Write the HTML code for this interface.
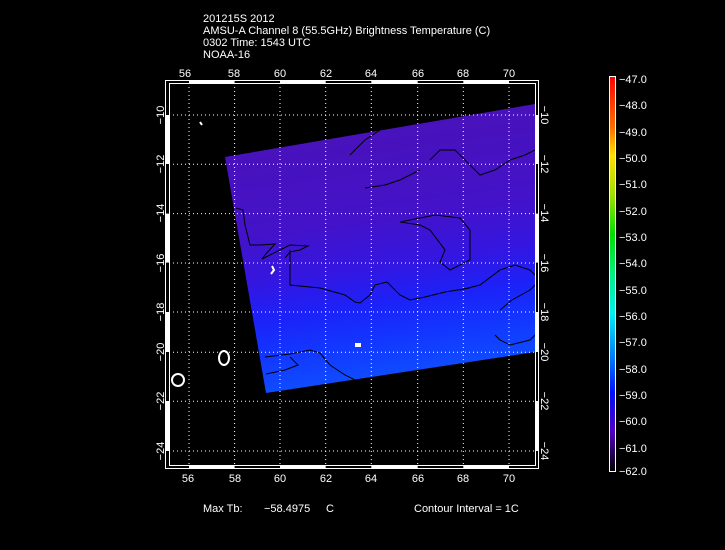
<!DOCTYPE html>
<html><head><style>
html,body{margin:0;padding:0;background:#000;width:725px;height:550px;overflow:hidden}
svg{display:block}
text{font-family:"Liberation Sans",sans-serif;fill:#fff;font-size:11px}
</style></head><body>
<svg width="725" height="550" viewBox="0 0 725 550" xmlns="http://www.w3.org/2000/svg">
<defs>
<linearGradient id="sw" x1="0" y1="0" x2="0.15" y2="1">
<stop offset="0" stop-color="#4a12b4"/>
<stop offset="0.45" stop-color="#4412c8"/>
<stop offset="0.62" stop-color="#3416e0"/>
<stop offset="0.75" stop-color="#1c22f8"/>
<stop offset="0.88" stop-color="#1238ff"/>
<stop offset="1" stop-color="#104cff"/>
</linearGradient>
<linearGradient id="cb" x1="0" y1="0" x2="0" y2="1">
<stop offset="0" stop-color="#ff0000"/>
<stop offset="0.13" stop-color="#ff7000"/>
<stop offset="0.2" stop-color="#ffe000"/>
<stop offset="0.3" stop-color="#a0e000"/>
<stop offset="0.4" stop-color="#00e000"/>
<stop offset="0.5" stop-color="#00f080"/>
<stop offset="0.6" stop-color="#00f0f0"/>
<stop offset="0.72" stop-color="#0070ff"/>
<stop offset="0.8" stop-color="#0010ff"/>
<stop offset="0.9" stop-color="#5000c0"/>
<stop offset="1" stop-color="#000000"/>
</linearGradient>
</defs>
<g>
<text x="203" y="22">201215S 2012</text>
<text x="203" y="34">AMSU-A Channel 8 (55.5GHz) Brightness Temperature (C)</text>
<text x="203" y="46">0302 Time: 1543 UTC</text>
<text x="203" y="58">NOAA-16</text>
</g>
<polygon points="225,157 535,104 535,352 266,393" fill="url(#sw)"/>
<g fill="none" stroke="#000" stroke-width="1">
<polyline points="236,208 243,210 245,225 250,245 260,245 275,244 265,255 262,259 280,250 290,245 308,246 300,250 290,252 285,258"/>
<polyline points="290,250 290,285 320,288 345,295 355,302 360,303 370,295 375,285 387,282 400,295 410,300 425,297 445,292 470,288"/>
<polyline points="365,188 385,185 400,180 420,170"/>
<polyline points="400,222 420,218 435,215 460,218 470,230 470,260 450,270 440,262 445,250 430,230 420,225 400,222"/>
<polyline points="460,290 480,285 500,270 515,265 530,270 535,275"/>
<polyline points="265,357 290,354 310,350 320,353 330,365 345,375 355,380"/>
<polyline points="266,374 285,370 298,365 290,357"/>
<polyline points="495,335 500,340 510,345 530,340 535,335"/>
<polyline points="500,310 512,300 530,290 535,285"/>
<polyline points="430,160 440,150 455,150 470,165 480,175 495,170 510,160 525,155 535,150"/>
<polyline points="350,155 365,140 380,130 400,125 420,115"/>
</g>
<g fill="none" stroke="#fff" stroke-width="2">
<ellipse cx="178" cy="380" rx="6" ry="6"/>
<ellipse cx="224" cy="358" rx="5" ry="7"/>
<path d="M272 266 L274 270 L271 274"/>
<rect x="356" y="344" width="4" height="2"/>
<path d="M200 122 L202 125"/>
</g>
<g stroke="#fff" stroke-width="1" stroke-dasharray="1,3">
<line x1="189" y1="83" x2="189" y2="466"/>
<line x1="234.6" y1="83" x2="234.6" y2="466"/>
<line x1="280" y1="83" x2="280" y2="466"/>
<line x1="325.7" y1="83" x2="325.7" y2="466"/>
<line x1="371.3" y1="83" x2="371.3" y2="466"/>
<line x1="417.7" y1="83" x2="417.7" y2="466"/>
<line x1="463.3" y1="83" x2="463.3" y2="466"/>
<line x1="509" y1="83" x2="509" y2="466"/>
<line x1="169" y1="115" x2="536" y2="115"/>
<line x1="169" y1="164.3" x2="536" y2="164.3"/>
<line x1="169" y1="213.6" x2="536" y2="213.6"/>
<line x1="169" y1="263" x2="536" y2="263"/>
<line x1="169" y1="312" x2="536" y2="312"/>
<line x1="169" y1="352.3" x2="536" y2="352.3"/>
<line x1="169" y1="401.3" x2="536" y2="401.3"/>
<line x1="169" y1="451" x2="536" y2="451"/>
</g>
<g fill="none" stroke="#fff" stroke-width="1">
<rect x="165.5" y="80.5" width="373" height="388"/>
<rect x="169.5" y="83.5" width="366" height="382"/>
</g>
<g fill="#fff">
<rect x="189" y="80" width="45.6" height="4"/><rect x="280" y="80" width="45.7" height="4"/><rect x="371.3" y="80" width="46.4" height="4"/><rect x="463.3" y="80" width="45.7" height="4"/>
<rect x="189" y="466" width="45.6" height="3"/><rect x="280" y="466" width="45.7" height="3"/><rect x="371.3" y="466" width="46.4" height="3"/><rect x="463.3" y="466" width="45.7" height="3"/>
<rect x="165" y="115" width="4" height="49"/><rect x="165" y="213.6" width="4" height="49"/><rect x="165" y="312" width="4" height="40"/><rect x="165" y="401" width="4" height="50"/>
<rect x="535" y="115" width="4" height="49"/><rect x="535" y="213.6" width="4" height="49"/><rect x="535" y="312" width="4" height="40"/><rect x="535" y="401" width="4" height="50"/>
</g>
<g text-anchor="middle">
<text x="185" y="77">56</text><text x="234" y="77">58</text><text x="280" y="77">60</text><text x="326" y="77">62</text><text x="371" y="77">64</text><text x="418" y="77">66</text><text x="463" y="77">68</text><text x="509" y="77">70</text>
<text x="188" y="482">56</text><text x="235" y="482">58</text><text x="280" y="482">60</text><text x="326" y="482">62</text><text x="371" y="482">64</text><text x="418" y="482">66</text><text x="463" y="482">68</text><text x="509" y="482">70</text>
</g>
<g text-anchor="middle">
<text transform="translate(164,115) rotate(-90)">−10</text>
<text transform="translate(164,164) rotate(-90)">−12</text>
<text transform="translate(164,213) rotate(-90)">−14</text>
<text transform="translate(164,263) rotate(-90)">−16</text>
<text transform="translate(164,312) rotate(-90)">−18</text>
<text transform="translate(164,352) rotate(-90)">−20</text>
<text transform="translate(164,401) rotate(-90)">−22</text>
<text transform="translate(164,451) rotate(-90)">−24</text>
<text transform="translate(541,115) rotate(90)">−10</text>
<text transform="translate(541,164) rotate(90)">−12</text>
<text transform="translate(541,213) rotate(90)">−14</text>
<text transform="translate(541,263) rotate(90)">−16</text>
<text transform="translate(541,312) rotate(90)">−18</text>
<text transform="translate(541,352) rotate(90)">−20</text>
<text transform="translate(541,401) rotate(90)">−22</text>
<text transform="translate(541,451) rotate(90)">−24</text>
</g>
<rect x="609.5" y="76.5" width="6" height="395" fill="url(#cb)" stroke="#fff" stroke-width="1"/>
<g>
<text x="619" y="83">−47.0</text><text x="619" y="109">−48.0</text><text x="619" y="136">−49.0</text><text x="619" y="162">−50.0</text><text x="619" y="188">−51.0</text><text x="619" y="215">−52.0</text><text x="619" y="241">−53.0</text><text x="619" y="267">−54.0</text><text x="619" y="294">−55.0</text><text x="619" y="320">−56.0</text><text x="619" y="346">−57.0</text><text x="619" y="373">−58.0</text><text x="619" y="399">−59.0</text><text x="619" y="425">−60.0</text><text x="619" y="452">−61.0</text><text x="619" y="475">−62.0</text>
</g>
<text x="203" y="512">Max Tb:</text>
<text x="264" y="512">−58.4975</text>
<text x="326" y="512">C</text>
<text x="414" y="512">Contour Interval = 1C</text>
</svg>
</body></html>
